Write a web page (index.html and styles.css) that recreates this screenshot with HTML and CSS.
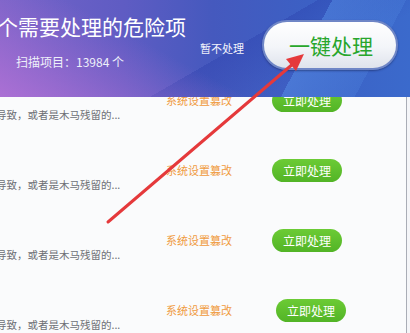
FILE: index.html
```html
<!DOCTYPE html>
<html lang="zh-CN">
<head>
<meta charset="utf-8">
<title>危险项</title>
<link rel="stylesheet" href="styles.css">
</head>
<body>
<div class="page">
  <header class="hero">
    <div class="hero-text">
      <h1 class="title">个需要处理的危险项</h1>
      <p class="scan">扫描项目：13984 个</p>
    </div>
    <a class="skip">暂不处理</a>
    <button class="fix-all">一键处理</button>
  </header>
  <ul class="list">
    <li class="row"><p class="desc">导致，或者是木马残留的...</p><span class="tag">系统设置篡改</span><button class="fix">立即处理</button></li>
    <li class="row"><p class="desc">导致，或者是木马残留的...</p><span class="tag">系统设置篡改</span><button class="fix">立即处理</button></li>
    <li class="row"><p class="desc">导致，或者是木马残留的...</p><span class="tag">系统设置篡改</span><button class="fix">立即处理</button></li>
    <li class="row row-last"><p class="desc">导致，或者是木马残留的...</p><span class="tag">系统设置篡改</span><button class="fix">立即处理</button></li>
  </ul>
  <svg class="arrow" width="410" height="333" viewBox="0 0 410 333">
    <line x1="108" y1="222" x2="294" y2="63" stroke="#e5393b" stroke-width="3" stroke-linecap="round"/>
    <polygon points="304,54 286,59 296,71" fill="#e5393b"/>
  </svg>
</div>
</body>
</html>
```
FILE: styles.css
```css
* { box-sizing: border-box; }
html, body {
  margin: 0;
  padding: 0;
  background: #f4f5f8;
  font-family: "Noto Sans CJK SC", "Noto Sans", sans-serif;
}
.page {
  position: relative;
  width: 410px;
  height: 333px;
  overflow: hidden;
  background: #f4f5f8;
}
.hero {
  position: relative;
  z-index: 1;
  display: flex;
  align-items: flex-start;
  width: 410px;
  height: 97px;
  background:
    linear-gradient(118deg, rgba(0,0,0,0) 72%, rgba(90,150,235,0.45) 72%, rgba(90,150,235,0.2) 88%, rgba(0,0,0,0) 88%),
    linear-gradient(28deg, rgba(185,115,215,0.8) 0%, rgba(170,110,210,0.4) 24%, rgba(170,110,210,0) 42%),
    linear-gradient(150deg, rgba(0,0,0,0) 55%, rgba(40,60,170,0.35) 55%, rgba(40,60,170,0) 75%),
    linear-gradient(90deg, #7563c8 0%, #5f5cc3 30%, #4559be 52%, #3c60c4 75%, #3b6acc 100%);
}
.hero-text {
  width: 200px;
  padding-top: 12px;
}
.title {
  margin: 0 0 0 -3px;
  font-size: 21px;
  line-height: 28px;
  font-weight: 400;
  color: #ffffff;
  white-space: nowrap;
}
.scan {
  margin: 14px 0 0 16px;
  font-size: 12px;
  line-height: 16px;
  color: #eef0fa;
  white-space: nowrap;
}
.skip {
  margin-top: 41px;
  width: 44px;
  font-size: 11px;
  line-height: 14px;
  color: #f2f3fb;
  white-space: nowrap;
}
.fix-all {
  margin: 20px 0 0 18px;
  width: 136px;
  height: 50px;
  border-radius: 25px;
  border: 2px solid #6f86c6;
  background: linear-gradient(#ffffff 0%, #f3f5f9 55%, #dfe3ec 100%);
  color: #28a62c;
  font-family: "Noto Sans CJK SC", sans-serif;
  font-size: 21px;
  line-height: 1;
  padding: 0 0 0 2px;
  box-shadow: 0 1px 2px rgba(20,30,80,0.5);
}
.list {
  list-style: none;
  margin: -8px 0 0 0;
  padding: 0;
  width: 407px;
  height: 244px;
  border-right: 1px solid #a9adb6;
  background: #fafbfc;
}
.row {
  display: grid;
  grid-template-columns: 166px 106px 70px;
  height: 70px;
  align-items: start;
}
.row-last {
  grid-template-columns: 166px 110px 70px;
}
.desc {
  margin: 19px 0 0 -4px;
  font-size: 10.5px;
  line-height: 14px;
  color: #6d6f75;
  white-space: nowrap;
}
.tag {
  font-size: 11px;
  line-height: 22px;
  color: #f09a3c;
  white-space: nowrap;
}
.fix {
  width: 70px;
  height: 23px;
  border: 0;
  border-radius: 12px;
  background: linear-gradient(#6ccb35, #52b426);
  color: #ffffff;
  font-family: "Noto Sans CJK SC", sans-serif;
  font-size: 12px;
  line-height: 1;
  padding: 0;
}
.arrow {
  position: absolute;
  left: 0;
  top: 0;
  z-index: 2;
  pointer-events: none;
}
```
